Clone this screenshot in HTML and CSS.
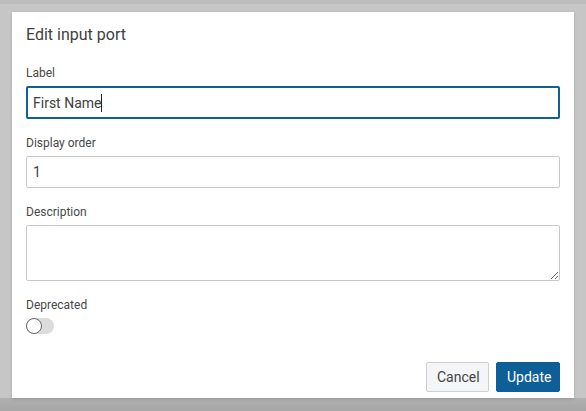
FILE: index.html
```html
<!DOCTYPE html>
<html>
<head>
<meta charset="utf-8">
<link rel="stylesheet" href="styles.css">
</head>
<body>
<div class="backdrop">
  <div class="modal">
    <h2 class="title">Edit input port</h2>
    <div class="field">
      <label class="label">Label</label>
      <div class="input focused"><span>First Name</span><span class="caret"></span></div>
    </div>
    <div class="field">
      <label class="label">Display order</label>
      <input class="input" type="text" value="1">
    </div>
    <div class="field">
      <label class="label">Description</label>
      <textarea class="input area"></textarea>
    </div>
    <div class="field">
      <label class="label">Deprecated</label>
      <div class="toggle"><span class="knob"></span></div>
    </div>
    <div class="actions">
      <button class="btn cancel">Cancel</button>
      <button class="btn primary">Update</button>
    </div>
  </div>
</div>
</body>
</html>
```
FILE: styles.css
```css
html, body {
  margin: 0;
  padding: 0;
  width: 586px;
  height: 411px;
  overflow: hidden;
}
body {
  font-family: Roboto, "Liberation Sans", sans-serif;
  color: #444;
  background: #c4c4c4;
}
.backdrop {
  width: 586px;
  height: 411px;
  box-sizing: border-box;
  padding: 12px 12px 0 12px;
  background:
    linear-gradient(to bottom, #bcbcbc 0, #bcbcbc 4px, #c6c6c6 4px, #c6c6c6 398px, #b0b0b0 398px, #a6a6a6 411px);
}
.modal {
  width: 562px;
  height: 386px;
  box-sizing: border-box;
  background: #fff;
  padding: 13px 14px 6px 14px;
  display: flex;
  flex-direction: column;
  box-shadow: 0 1px 3px rgba(0,0,0,0.15);
}
.title {
  margin: 0 0 20px 0;
  font-size: 16px;
  line-height: 20px;
  font-weight: 400;
  color: #404040;
}
.field {
  display: flex;
  flex-direction: column;
  margin-bottom: 16px;
}
.label {
  font-size: 12px;
  line-height: 16px;
  color: #484848;
  margin-bottom: 5px;
}
.input {
  box-sizing: border-box;
  height: 32px;
  width: 100%;
  border: 1px solid #c9c9c9;
  border-radius: 2px;
  padding: 0 6px;
  font-family: Roboto, "Liberation Sans", sans-serif;
  font-size: 14px;
  color: #404040;
  background: #fff;
  outline: none;
  margin: 0;
}
.input.focused {
  height: 33px;
  border: 2px solid #0f5e97;
  display: flex;
  align-items: center;
  padding: 0 5px;
}
.caret {
  display: inline-block;
  width: 1px;
  height: 18px;
  background: #222;
}
.area {
  height: 56px;
  resize: both;
  padding: 6px;
}
.toggle {
  width: 28px;
  height: 16px;
  border-radius: 8px;
  background: #dcdcdc;
  position: relative;
}
.knob {
  position: absolute;
  left: 0;
  top: 0;
  width: 16px;
  height: 16px;
  box-sizing: border-box;
  border-radius: 50%;
  background: #fff;
  border: 1px solid #666;
}
.actions {
  margin-top: auto;
  display: flex;
  justify-content: flex-end;
  gap: 7px;
}
.btn {
  height: 30px;
  box-sizing: border-box;
  border-radius: 2px;
  font-family: Roboto, "Liberation Sans", sans-serif;
  font-size: 14px;
  padding: 0 10px;
  cursor: pointer;
}
.cancel {
  width: 63px;
  background: #f4f5f7;
  border: 1px solid #cfcfcf;
  color: #444;
}
.primary {
  width: 64px;
  background: #0e5f98;
  border: 1px solid #0e5f98;
  color: #fff;
}
```
